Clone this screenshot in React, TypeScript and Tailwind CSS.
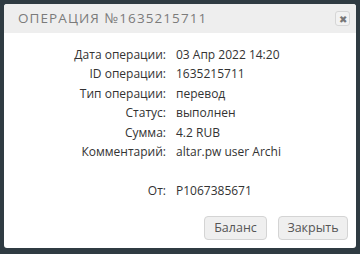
const rows: [string, string][] = [
  ["Дата операции:", "03 Апр 2022 14:20"],
  ["ID операции:", "1635215711"],
  ["Тип операции:", "перевод"],
  ["Статус:", "выполнен"],
  ["Сумма:", "4.2 RUB"],
  ["Комментарий:", "altar.pw user Archi"],
];

export default function App() {
  return (
    <div className="h-[254px] w-[360px] overflow-hidden bg-[#2f3b42] p-1 font-['Open_Sans',sans-serif]">
      <div className="flex h-[244px] w-[352px] flex-col rounded-[3px] bg-white">
        <div className="flex h-[29px] items-center justify-between rounded-t-[3px] bg-[#eeeeee] pl-[14px] pr-[6px]">
          <span className="text-[13.5px] tracking-[0.08em] text-[#7b7b7b]">
            ОПЕРАЦИЯ №1635215711
          </span>
          <button
            type="button"
            className="flex h-[15px] w-[15px] items-center justify-center rounded-[3px] border border-[#d6d6d6] bg-[#f2f2f2] text-[10px] leading-none text-[#777]"
          >
            ✖
          </button>
        </div>
        <div className="grid grid-cols-[162px_1fr] gap-x-[10px] pt-[12px] text-[12px] leading-[19.4px] text-[#333]">
          {rows.map(([k, v]) => (
            <div key={k} className="contents">
              <div className="text-right">{k}</div>
              <div>{v}</div>
            </div>
          ))}
          <div className="h-[19.4px]" />
          <div />
          <div className="text-right">От:</div>
          <div>P1067385671</div>
        </div>
        <div className="mt-auto flex justify-end gap-[11px] px-[8px] pb-[8px]">
          <button
            type="button"
            className="h-[24px] w-[63px] rounded-[4px] border border-[#d4d4d4] bg-[#efefef] text-[12.5px] text-[#555]"
          >
            Баланс
          </button>
          <button
            type="button"
            className="h-[24px] w-[70px] rounded-[4px] border border-[#d4d4d4] bg-[#efefef] text-[12.5px] text-[#555]"
          >
            Закрыть
          </button>
        </div>
      </div>
    </div>
  );
}
